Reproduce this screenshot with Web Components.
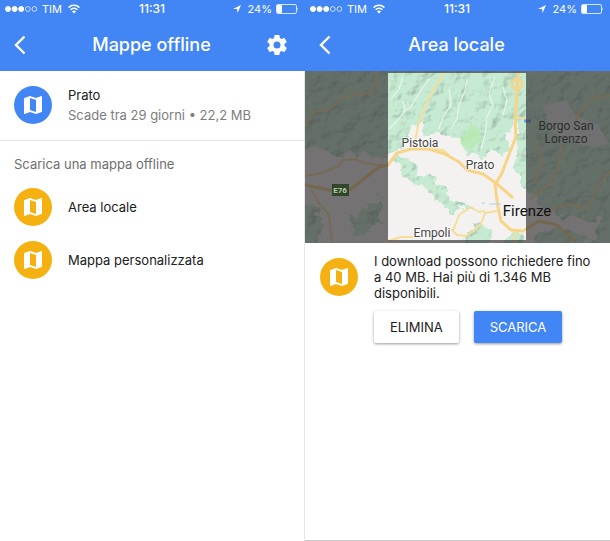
<!DOCTYPE html>
<html lang="it">
<head>
<meta charset="utf-8">
<meta name="viewport" content="width=device-width, initial-scale=1">
<title>Mappe offline</title>
<style>
  :root {
    --blue: #4285f4;
    --amber: #f5b111;
    --ink: #202020;
    --muted: #7d7d7d;
    --line: #e6e6e6;
  }

  body {
    margin: 0;
    min-height: 100vh;
    display: grid;
    grid-template-columns: 1fr 1fr;
    background: #fff;
    color: var(--ink);
    font-family: Inter, "Liberation Sans", sans-serif;
    font-size: 13px;
    line-height: 16px;
  }
</style>
</head>
<body>
  <phone-screen>
    <status-bar slot="top"></status-bar>
    <app-header slot="top" settings>Mappe offline</app-header>
    <map-row divided>
      Prato
      <span slot="detail">Scade tra 29 giorni • 22,2 MB</span>
    </map-row>
    <section-title>Scarica una mappa offline</section-title>
    <map-row tone="amber">Area locale</map-row>
    <map-row tone="amber">Mappa personalizzata</map-row>
  </phone-screen>

  <phone-screen framed>
    <status-bar slot="top"></status-bar>
    <app-header slot="top">Area locale</app-header>
    <area-map></area-map>
    <download-prompt>
      I download possono richiedere fino a 40 MB. Hai più di 1.346 MB disponibili.
      <action-button slot="actions">ELIMINA</action-button>
      <action-button slot="actions" primary>SCARICA</action-button>
    </download-prompt>
  </phone-screen>

<script>
class PhoneScreen extends HTMLElement {
  constructor() {
    super();
    this.attachShadow({ mode: 'open' }).innerHTML = `
      <style>
        :host {
          display: flex;
          flex-direction: column;
          min-width: 0;
          box-sizing: border-box;
        }
        :host([framed]) {
          border-bottom: 1px solid #c9c9cb;
        }
        header {
          background: var(--blue);
          color: #fff;
        }
        main {
          flex: 1;
        }
        :host(:not([framed])) main {
          border-right: 1px solid var(--line);
        }
      </style>
      <header><slot name="top"></slot></header>
      <main><slot></slot></main>
    `;
  }
}

class StatusBar extends HTMLElement {
  constructor() {
    super();
    this.attachShadow({ mode: 'open' }).innerHTML = `
      <style>
        :host {
          display: grid;
          grid-template-columns: 1fr auto 1fr;
          align-items: center;
          padding: 0 6px 0 5px;
          height: 18px;
          font-size: 11px;
        }
        div {
          display: flex;
          align-items: center;
          gap: 4px;
        }
        .right {
          justify-content: flex-end;
        }
        .arrow {
          margin-right: 3px;
        }
        .wifi {
          margin-left: 2px;
        }
        time {
          font-size: 12px;
          font-weight: 500;
        }
        svg {
          display: block;
          flex: none;
        }
      </style>
      <div>
        <svg width="33" height="8" viewBox="0 0 33 8" fill="#fff" stroke="#fff">
          <circle cx="3" cy="4" r="2.5"/>
          <circle cx="9.6" cy="4" r="2.5"/>
          <circle cx="16.2" cy="4" r="2.5"/>
          <circle cx="22.8" cy="4" r="2.4" fill="none" stroke-width=".7"/>
          <circle cx="29.4" cy="4" r="2.4" fill="none" stroke-width=".7"/>
        </svg>
        <span>TIM</span>
        <svg class="wifi" width="12" height="10" viewBox="0 0 12 10" fill="none" stroke="#fff" stroke-width="1.5">
          <path d="M.6 3.6a7.6 7.6 0 0 1 10.8 0"/>
          <path d="M2.6 5.7a4.8 4.8 0 0 1 6.8 0"/>
          <path d="M6 9.6 4 7.5a2.8 2.8 0 0 1 4 0z" fill="#fff" stroke="none"/>
        </svg>
      </div>
      <time>11:31</time>
      <div class="right">
        <svg class="arrow" width="8" height="8" viewBox="0 0 8 8" fill="#fff">
          <path d="M8 0 4.6 8 4.1 4H0z"/>
        </svg>
        <span>24%</span>
        <svg width="23" height="10" viewBox="0 0 23 10">
          <rect x=".5" y=".5" width="20" height="9" rx="1.5" fill="none" stroke="#fff" stroke-width=".8"/>
          <rect x="1" y="1" width="5" height="8" rx="1" fill="#fff"/>
          <path d="M21.5 3.5q1.4 1.5 0 3z" fill="#fff"/>
        </svg>
      </div>
    `;
  }
}

class AppHeader extends HTMLElement {
  constructor() {
    super();
    this.attachShadow({ mode: 'open' });
  }

  connectedCallback() {
    const gear = `
      <button aria-label="Impostazioni">
        <svg width="24" height="24" viewBox="0 0 24 24" fill="#fff">
          <path d="M19.43 12.98c.04-.32.07-.64.07-.98s-.03-.66-.07-.98l2.11-1.65c.19-.15.24-.42.12-.64l-2-3.46c-.12-.22-.39-.3-.61-.22l-2.49 1c-.52-.4-1.08-.73-1.69-.98l-.38-2.65C14.46 2.18 14.25 2 14 2h-4c-.25 0-.46.18-.49.42l-.38 2.65c-.61.25-1.17.59-1.69.98l-2.49-1c-.23-.09-.49 0-.61.22l-2 3.46c-.13.22-.07.49.12.64l2.11 1.65c-.04.32-.07.65-.07.98s.03.66.07.98l-2.11 1.65c-.19.15-.24.42-.12.64l2 3.46c.12.22.39.3.61.22l2.49-1c.52.4 1.08.73 1.69.98l.38 2.65c.03.24.24.42.49.42h4c.25 0 .46-.18.49-.42l.38-2.65c.61-.25 1.17-.59 1.69-.98l2.49 1c.23.09.49 0 .61-.22l2-3.46c.12-.22.07-.49-.12-.64zM12 15.5a3.5 3.5 0 1 1 0-7 3.5 3.5 0 0 1 0 7z"/>
        </svg>
      </button>`;

    this.shadowRoot.innerHTML = `
      <style>
        :host {
          display: grid;
          grid-template-columns: 30px 1fr 24px;
          align-items: center;
          padding: 0 16px 0 8px;
          height: 53px;
        }
        h1 {
          margin: 0;
          font-size: 18px;
          line-height: 24px;
          font-weight: 500;
          text-align: center;
        }
        button {
          display: block;
          padding: 0;
          border: 0;
          background: none;
          cursor: pointer;
        }
        svg {
          display: block;
        }
      </style>
      <button aria-label="Indietro">
        <svg width="24" height="24" viewBox="0 0 24 24" fill="none" stroke="#fff" stroke-width="2.4">
          <path d="M16.5 3.5 8 12l8.5 8.5"/>
        </svg>
      </button>
      <h1><slot></slot></h1>
      ${this.hasAttribute('settings') ? gear : ''}
    `;
  }
}

// Round badge with the folded map glyph
class MapBadge extends HTMLElement {
  constructor() {
    super();
    this.attachShadow({ mode: 'open' }).innerHTML = `
      <style>
        :host {
          display: grid;
          place-items: center;
          flex: none;
          width: 38px;
          height: 38px;
          border-radius: 50%;
          background: var(--blue);
        }
        :host([tone="amber"]) {
          background: var(--amber);
        }
      </style>
      <svg width="24" height="24" viewBox="0 0 24 24" fill="#fff">
        <path d="M20.5 3l-.16.03L15 5.1 9 3 3.36 4.9c-.21.07-.36.25-.36.48V20.5c0 .28.22.5.5.5l.16-.03L9 18.9l6 2.1 5.64-1.9c.21-.07.36-.25.36-.48V3.5c0-.28-.22-.5-.5-.5zM15 19l-6-2.11V5l6 2.11V19z"/>
      </svg>
    `;
  }
}

class MapRow extends HTMLElement {
  constructor() {
    super();
    this.attachShadow({ mode: 'open' });
  }

  connectedCallback() {
    this.shadowRoot.innerHTML = `
      <style>
        :host {
          display: flex;
          align-items: center;
          gap: 16px;
          padding: 8px 14px 7px;
        }
        :host([divided]) {
          padding: 15px 14px 16px;
          border-bottom: 1px solid var(--line);
        }
        .text {
          display: flex;
          flex-direction: column;
          gap: 4px;
        }
        ::slotted([slot="detail"]) {
          color: var(--muted);
        }
      </style>
      <map-badge tone="${this.getAttribute('tone') || 'blue'}"></map-badge>
      <div class="text">
        <div><slot></slot></div>
        <slot name="detail"></slot>
      </div>
    `;
  }
}

class SectionTitle extends HTMLElement {
  constructor() {
    super();
    this.attachShadow({ mode: 'open' }).innerHTML = `
      <style>
        :host {
          display: block;
          padding: 15px 14px 8px;
        }
        h2 {
          margin: 0;
          font-size: 13px;
          line-height: 16px;
          font-weight: 400;
          color: #6e6e6e;
        }
      </style>
      <h2><slot></slot></h2>
    `;
  }
}

class AreaMap extends HTMLElement {
  constructor() {
    super();
    this.attachShadow({ mode: 'open' }).innerHTML = `
      <style>
        :host {
          display: block;
        }
        svg {
          display: block;
          width: 100%;
          height: auto;
        }
        text {
          font-family: Roboto, "Liberation Sans", sans-serif;
          font-size: 12px;
          fill: #444;
          text-anchor: middle;
        }
        .halo {
          stroke: #fff;
          stroke-width: 2px;
          stroke-opacity: .7;
          paint-order: stroke;
        }
        .outside {
          fill: #2e2e2e;
        }
        .city {
          font-size: 15px;
          fill: #111;
        }
        .shield {
          font-size: 8px;
          font-weight: 700;
          fill: #b9cdb0;
        }
      </style>
      <svg viewBox="0 0 305 172" role="img" aria-label="Mappa dell'area tra Pistoia e Firenze">
        <defs>
          <filter id="relief" x="0" y="0" width="100%" height="100%" color-interpolation-filters="sRGB">
            <feTurbulence type="fractalNoise" baseFrequency=".07" numOctaves="3" seed="8" result="noise"/>
            <feDisplacementMap in="SourceGraphic" in2="noise" scale="20" xChannelSelector="R" yChannelSelector="G" result="shape"/>
            <feDiffuseLighting in="noise" surfaceScale="1.5" diffuseConstant="1.14" lighting-color="#fff" result="light">
              <feDistantLight azimuth="225" elevation="62"/>
            </feDiffuseLighting>
            <feBlend in="shape" in2="light" mode="multiply" result="lit"/>
            <feComposite in="lit" in2="shape" operator="in"/>
          </filter>
        </defs>

        <rect width="305" height="172" fill="#f4f2f1"/>

        <!-- hills -->
        <g filter="url(#relief)" fill="#c6ead2">
          <path d="M-20-20H330V200H236L228 168 240 158 262 160 285 172 300 150 262 146 240 138 226 122 221 116 206 100 212 78 213 52 205 48 206 70 196 86 184 82 166 84 154 66 138 66 124 64 117 50 108 56 104 72 90 80 78 86 62 86 48 80 34 86 16 78-20 80z"/>
          <path d="M88 88 100 88 114 100 130 112 144 122 152 132 148 142 138 138 128 126 110 112 94 98z"/>
          <path d="M42 148 62 134 78 126 82 140 66 156 46 166z"/>
          <path d="M-10 134 10 136 20 154 10 176H-10z"/>
          <path d="M154 178 162 158 174 154 186 158 182 178z"/>
          <path d="M196 170 214 164 226 178H194z"/>
          <path d="M150 132 162 132 168 140 154 140z"/>
        </g>
        <path d="M238 34 262 30 270 44 292 54 304 72 288 76 262 70 246 60z" fill="#f4f2f1" opacity=".8"/>
        <path d="M156 66 162 61 166 55 171 54 175 60 177 70 170 74 166 80 161 76 155 73z" fill="#b6eab0" opacity=".8"/>
        <g fill="none" stroke="#f3f8f3" stroke-width="1.2" opacity=".8">
          <path d="M84 58 92 50 100 40 106 36 114 22 124 8"/>
          <path d="M86 28 94 18 98 6M100 40 98 30"/>
          <path d="M190 6 184 22 188 34 182 46 180 64 176 78"/>
          <path d="M162 8 160 20 154 34 152 48 146 58"/>
          <path d="M134 58 138 46 146 34 144 18"/>
          <path d="M198 16 202 30 198 44"/>
        </g>

        <!-- minor roads -->
        <g fill="none" stroke="#f6dd9a" stroke-width="2" stroke-linejoin="round">
          <path d="M0 55 6 42 24 38 38 26 66 22 71 10 71 0"/>
          <path d="M0 105 16 102 34 95 38 89 50 88 60 92 72 94 83 94"/>
          <path d="M6 118 14 132 24 144 27 172"/>
          <path d="M110 70 113 55 117 43 124 28 131 14 139 2"/>
          <path d="M83 170 96 166 108 166"/>
          <path d="M146 158 152 164 162 165 176 153 180 142 192 140M148 160 154 144 166 136 174 141 180 140"/>
          <path d="M122 78 138 79 144 84"/>
          <path d="M270 50 276 38 288 28 305 24"/>
          <path d="M257 74 254 94 244 114 226 128M232 70 237 92 230 112"/>
          <path d="M305 100 292 116 284 138 268 134 252 136 240 146"/>
          <path d="M211 160 208 172M221 48 212 46"/>
        </g>

        <!-- motorways -->
        <g fill="none" stroke="#f7d486" stroke-linejoin="round" stroke-linecap="round">
          <path d="M0 114 24 119 46 118 60 107 74 96 83 94 92 82 106 78 124 78 140 83 154 91 162 99 178 103 192 113 207 126" stroke-width="3"/>
          <path d="M213 0 212 20 210 50 211 66 203 86 197 102 190 114 193 136 196 150 206 159 218 160 234 150 252 154 270 170" stroke-width="3"/>
          <circle cx="212" cy="13" r="5" stroke-width="2.5"/>
        </g>
        <path d="M177 132h3M184 133h12" stroke="#a9cdf5" stroke-width="1"/>
        <path d="M219 50h7" stroke="#69a2ec" stroke-width="3"/>

        <g class="halo">
          <text x="115" y="76">Pistoia</text>
          <text x="175" y="98">Prato</text>
          <text x="127" y="166">Empoli</text>
        </g>
        <rect x="27" y="113" width="17" height="12" fill="#2f7a1c"/>

        <!-- everything outside the selected area is dimmed -->
        <path d="M0 0H305V172H0zM83 2V169H221V2z" fill="#302c30" fill-opacity=".65" fill-rule="evenodd"/>
        <text class="outside" x="261" y="59">Borgo San</text>
        <text class="outside" x="261" y="72">Lorenzo</text>
        <text class="shield" x="35" y="122">E76</text>
        <text class="city" x="222" y="145">Firenze</text>
      </svg>
    `;
  }
}

class DownloadPrompt extends HTMLElement {
  constructor() {
    super();
    this.attachShadow({ mode: 'open' }).innerHTML = `
      <style>
        :host {
          display: flex;
          align-items: flex-start;
          gap: 16px;
          padding: 10px 14px 16px 15px;
        }
        map-badge {
          margin-top: 5px;
        }
        p {
          margin: 0 0 10px;
        }
        .actions {
          display: flex;
          gap: 15px;
        }
      </style>
      <map-badge tone="amber"></map-badge>
      <div>
        <p><slot></slot></p>
        <div class="actions"><slot name="actions"></slot></div>
      </div>
    `;
  }
}

class ActionButton extends HTMLElement {
  constructor() {
    super();
    this.attachShadow({ mode: 'open' }).innerHTML = `
      <style>
        :host {
          display: block;
        }
        button {
          display: block;
          padding: 8px 16px;
          border: 0;
          border-radius: 2px;
          background: #fff;
          color: inherit;
          font: inherit;
          box-shadow: 0 1px 3px rgba(0, 0, 0, .4);
          cursor: pointer;
        }
        :host([primary]) button {
          background: var(--blue);
          color: #fff;
        }
      </style>
      <button><slot></slot></button>
    `;
  }
}

customElements.define('map-badge', MapBadge);
customElements.define('phone-screen', PhoneScreen);
customElements.define('status-bar', StatusBar);
customElements.define('app-header', AppHeader);
customElements.define('map-row', MapRow);
customElements.define('section-title', SectionTitle);
customElements.define('area-map', AreaMap);
customElements.define('action-button', ActionButton);
customElements.define('download-prompt', DownloadPrompt);
</script>
</body>
</html>
